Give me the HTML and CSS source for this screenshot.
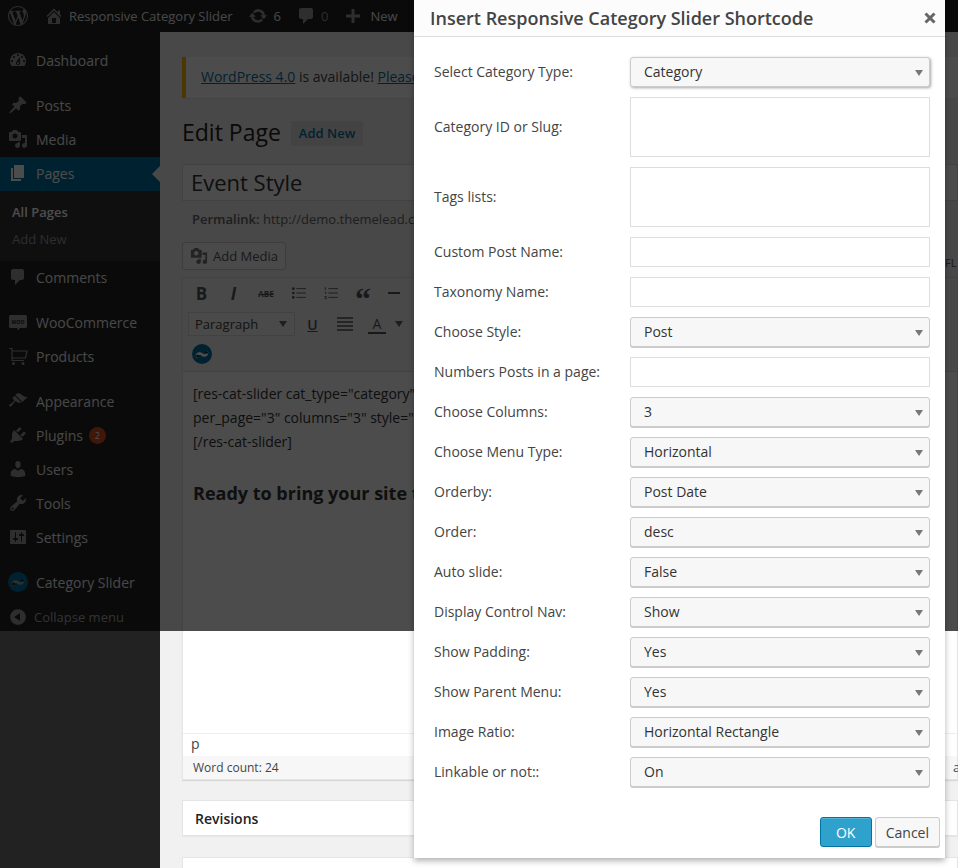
FILE: index.html
```html
<!DOCTYPE html>
<html>
<head>
  <title>Edit Page</title>
  <link rel="stylesheet" href="styles.css">
</head>
<body>
<div class="page">
  <div class="adminbar">
    <svg class="wplogo" viewBox="0 0 20 20"><path d="M20 10c0-5.51-4.49-10-10-10C4.48 0 0 4.49 0 10c0 5.52 4.48 10 10 10 5.51 0 10-4.48 10-10zM7.78 15.37L4.37 6.22c.55-.02 1.17-.08 1.17-.08.5-.06.44-1.13-.06-1.11 0 0-1.45.11-2.37.11-.18 0-.37 0-.58-.01C4.12 2.69 6.87 1.11 10 1.11c2.33 0 4.45.87 6.05 2.34-.68-.11-1.65.39-1.65 1.58 0 .74.45 1.36.9 2.1.35.61.55 1.36.55 2.46 0 1.49-1.4 5-1.4 5l-3.03-8.37c.54-.02.82-.17.82-.17.5-.05.44-1.25-.06-1.22 0 0-1.44.12-2.38.12-.87 0-2.33-.12-2.33-.12-.5-.03-.56 1.2-.06 1.22l.92.08 1.26 3.41zM17.41 10c.24-.64.74-1.87.43-4.25.7 1.29 1.05 2.71 1.05 4.25 0 3.29-1.73 6.24-4.4 7.78.97-2.59 1.94-5.2 2.92-7.78zM6.1 18.09C3.12 16.65 1.11 13.53 1.11 10c0-1.3.23-2.48.72-3.59C3.25 10.3 4.67 14.2 6.1 18.09zm4.03-6.63l2.58 6.98c-.86.29-1.76.45-2.71.45-.79 0-1.57-.11-2.29-.33.81-2.38 1.62-4.74 2.42-7.1z"/></svg>
    <div class="bar-item bar-site"><svg class="bar-icon" viewBox="0 0 20 20"><path d="M16 8.5l1.53 1.53-1.06 1.06L10 4.62l-6.47 6.47-1.06-1.06L10 2.5l4 4v-2h2v4zm-6-2.46l6 5.99V18H4v-5.97zM12 17v-5H8v5h4z"/></svg>Responsive Category Slider</div>
    <div class="bar-item bar-updates"><svg class="bar-icon" viewBox="0 0 20 20"><path d="M10.2 3.28c3.53 0 6.43 2.61 6.92 6h2.08l-3.5 4-3.5-4h2.32c-.45-1.97-2.21-3.45-4.32-3.45-1.45 0-2.73.71-3.54 1.78L4.95 5.66C6.23 4.2 8.11 3.28 10.2 3.28zm-.4 13.44c-3.52 0-6.43-2.61-6.92-6H.8l3.5-4c1.17 1.33 2.33 2.67 3.5 4H5.48c.45 1.97 2.21 3.45 4.32 3.45 1.45 0 2.73-.71 3.54-1.78l1.71 1.95c-1.28 1.46-3.15 2.38-5.25 2.38z"/></svg>6</div>
    <div class="bar-item bar-comments"><svg class="bar-icon" viewBox="0 0 20 20"><path d="M5 2h10c1.1 0 2 .9 2 2v7c0 1.1-.9 2-2 2h-3l-5 5v-5H5c-1.1 0-2-.9-2-2V4c0-1.1.9-2 2-2z"/></svg><span class="muted">0</span></div>
    <div class="bar-item bar-new"><svg class="bar-icon" viewBox="0 0 20 20"><path d="M17 8.500v3h-5.500V17h-3v-5.500H3v-3h5.500V3h3v5.500z"/></svg>New</div>
  </div>

  <div class="layout">
    <nav class="sidebar">
      <a class="menu-item"><svg class="menu-icon" viewBox="0 0 20 20"><path d="M3.76 16h12.48c1.1-1.37 1.76-3.11 1.76-5 0-4.42-3.58-8-8-8s-8 3.58-8 8c0 1.89.66 3.63 1.76 5zM10 4c.55 0 1 .45 1 1s-.45 1-1 1-1-.45-1-1 .45-1 1-1zM6 6c.55 0 1 .45 1 1s-.45 1-1 1-1-.45-1-1 .45-1 1-1zm8 0c.55 0 1 .45 1 1s-.45 1-1 1-1-.45-1-1 .45-1 1-1zm-5.37 5.55L12 7v6c0 1.1-.9 2-2 2s-2-.9-2-2c0-.57.24-1.08.63-1.45zM4 10c.55 0 1 .45 1 1s-.45 1-1 1-1-.45-1-1 .45-1 1-1zm12 0c.55 0 1 .45 1 1s-.45 1-1 1-1-.45-1-1 .45-1 1-1zm-5 3c0-.55-.45-1-1-1s-1 .45-1 1 .45 1 1 1 1-.45 1-1z"/></svg>Dashboard</a>
      <div class="menu-sep"></div>
      <a class="menu-item"><svg class="menu-icon" viewBox="0 0 20 20"><path d="M10.44 3.02l1.82-1.82 6.36 6.35-1.83 1.82c-1.05-.68-2.48-.57-3.41.36l-.75.75c-.92.93-1.04 2.35-.35 3.41l-1.83 1.82-2.41-2.41-2.8 2.79c-.42.42-3.38 2.71-3.8 2.29s1.86-3.39 2.28-3.81l2.79-2.79L4.1 9.36l1.83-1.82c1.05.69 2.48.57 3.4-.36l.75-.75c.93-.92 1.05-2.35.36-3.41z"/></svg>Posts</a>
      <a class="menu-item"><svg class="menu-icon" viewBox="0 0 20 20"><path d="M13 11V4c0-.55-.45-1-1-1h-1.67L9 1H5L3.67 3H2c-.55 0-1 .45-1 1v7c0 .55.45 1 1 1h10c.55 0 1-.45 1-1zM7 4.5c1.38 0 2.5 1.12 2.5 2.5S8.38 9.5 7 9.5 4.5 8.38 4.5 7 5.62 4.5 7 4.5zM14 6h5v10.5c0 1.38-1.12 2.5-2.5 2.5S14 17.88 14 16.5s1.12-2.5 2.5-2.5c.17 0 .34.02.5.05V9h-3V6zm-4 8.05V13h2v3.5c0 1.38-1.12 2.5-2.5 2.5S7 17.88 7 16.5 8.12 14 9.5 14c.17 0 .34.02.5.05z"/></svg>Media</a>
      <a class="menu-item current"><svg class="menu-icon" viewBox="0 0 20 20"><path d="M6 15V2h10v13H6zm-1 1h8v2H3V5h2v11z"/></svg>Pages</a>
      <div class="submenu">
        <a class="sub-item sub-current">All Pages</a>
        <a class="sub-item">Add New</a>
      </div>
      <a class="menu-item"><svg class="menu-icon" viewBox="0 0 20 20"><path d="M5 2h9c1.1 0 2 .9 2 2v7c0 1.1-.9 2-2 2h-2l-5 5v-5H5c-1.1 0-2-.9-2-2V4c0-1.1.9-2 2-2z"/></svg>Comments</a>
      <div class="menu-sep"></div>
      <a class="menu-item"><svg class="menu-icon" viewBox="0 0 20 20"><path d="M2.5 3h15c.8 0 1.5.7 1.5 1.5v10c0 .8-.7 1.5-1.5 1.5H12l-2 2.5L9 16H2.5C1.7 16 1 15.300 1 14.500v-10C1 3.700 1.700 3 2.500 3z"/><text class="woo-text" x="10" y="11.500" text-anchor="middle">WOO</text></svg>WooCommerce</a>
      <a class="menu-item"><svg class="menu-icon" viewBox="0 0 20 20"><path class="cart" d="M1 2.500h3v12h12M4 5h15l-1.500 7H4"/><circle cx="5.500" cy="17.500" r="1.500"/><circle cx="15" cy="17.500" r="1.500"/></svg>Products</a>
      <div class="menu-sep"></div>
      <a class="menu-item"><svg class="menu-icon" viewBox="0 0 20 20"><path d="M14.480 11.060L7.410 3.990l1.500-1.500c.5-.56 2.300-.47 3.510.32 1.210.8 1.430 1.280 2.910 2.100 1.180.64 2.450 1.260 4.450.85zm-.71.71L6.700 4.700 4.930 6.470c-.39.39-.39 1.020 0 1.410l1.060 1.060c.39.39.39 1.030 0 1.420-.6.6-1.430 1.110-2.210 1.690-.35.26-.7.530-1.010.84C1.430 13.230.4 14.060 1.400 15.060c1 1 1.830-.03 3.170-1.370.31-.31.58-.66.84-1.010.58-.78 1.090-1.610 1.690-2.210.39-.39 1.030-.39 1.420 0l1.060 1.060c.39.39 1.020.39 1.410 0z"/></svg>Appearance</a>
      <a class="menu-item"><svg class="menu-icon" viewBox="0 0 20 20"><path d="M13.110 4.360L9.870 7.600 8 5.730l3.240-3.240c.35-.34 1.050-.2 1.560.32.52.51.66 1.210.31 1.550zm-8 1.770l.91-1.120 9.010 9.010-1.190.84c-.71.71-2.630 1.160-3.820 1.160H6.140L4.900 17.260c-.59.59-1.540.59-2.120 0-.59-.58-.59-1.530 0-2.120l1.240-1.240v-3.880c0-1.130.4-3.190 1.090-3.890zm7.260 3.970l3.240-3.240c.34-.35 1.040-.21 1.550.31.52.51.66 1.210.31 1.550l-3.240 3.250z"/></svg>Plugins<span class="badge">2</span></a>
      <a class="menu-item"><svg class="menu-icon" viewBox="0 0 20 20"><path d="M10 9.250c-2.270 0-2.730-3.440-2.730-3.440C7 4.020 7.820 2 9.970 2c2.160 0 2.980 2.020 2.710 3.810 0 0-.41 3.440-2.680 3.440zm0 2.570L12.720 10c2.390 0 4.520 2.330 4.520 4.530v2.490s-3.650 1.130-7.240 1.130c-3.650 0-7.240-1.130-7.240-1.130v-2.490c0-2.250 1.940-4.480 4.470-4.480z"/></svg>Users</a>
      <a class="menu-item"><svg class="menu-icon" viewBox="0 0 20 20"><path d="M16.680 9.770c-1.340 1.340-3.300 1.670-4.950.99l-5.410 6.520c-.99.99-2.590.99-3.580 0s-.99-2.590 0-3.570l6.520-5.420c-.68-1.650-.35-3.610.99-4.950 1.280-1.280 3.120-1.620 4.720-1.060l-2.890 2.890 2.820 2.820 2.860-2.870c.53 1.580.18 3.390-1.080 4.650zM3.810 16.210c.4.39 1.040.39 1.430 0 .4-.4.4-1.040 0-1.430-.39-.4-1.030-.4-1.430 0-.39.39-.39 1.030 0 1.430z"/></svg>Tools</a>
      <a class="menu-item"><svg class="menu-icon" viewBox="0 0 20 20"><path d="M18 16V4c0-.55-.45-1-1-1H3c-.55 0-1 .45-1 1v12c0 .55.45 1 1 1h14c.55 0 1-.45 1-1zM8 11h1c.55 0 1 .45 1 1s-.45 1-1 1H8v1.500c0 .28-.22.5-.5.5s-.5-.22-.5-.5V13H6c-.55 0-1-.45-1-1s.45-1 1-1h1V5.500c0-.28.22-.5.5-.5s.5.22.5.5V11zm5-2h-1c-.55 0-1-.45-1-1s.45-1 1-1h1V5.500c0-.28.22-.5.5-.5s.5.22.5.5V7h1c.55 0 1 .45 1 1s-.45 1-1 1h-1v5.500c0 .28-.22.5-.5.5s-.5-.22-.5-.5V9z"/></svg>Settings</a>
      <div class="menu-sep"></div>
      <a class="menu-item"><svg class="slider-icon" viewBox="0 0 20 20"><circle cx="10" cy="10" r="10"/><path d="M5 12.500c0-3.500 3.500-3.500 5-2s5 1.500 5-2"/><circle class="slider-end" cx="5.500" cy="12" r="1.300"/><circle class="slider-end" cx="14.500" cy="8.500" r="1.300"/></svg>Category Slider</a>
      <a class="menu-item collapse"><svg class="menu-icon" viewBox="0 0 20 20"><path d="M10 2.160c4.330 0 7.840 3.510 7.840 7.840s-3.510 7.840-7.840 7.840S2.160 14.330 2.160 10 5.710 2.160 10 2.160zm2 11.720V6.120L6.180 9.970z"/></svg>Collapse menu</a>
    </nav>

    <main class="main">
      <div class="notice"><a>WordPress 4.0</a> is available! <a>Please</a></div>
      <div class="heading">
        <h1>Edit Page</h1>
        <a class="add-new">Add New</a>
      </div>
      <div class="title-field">Event Style</div>
      <div class="permalink"><b>Permalink:</b> http://demo.themelead.c</div>
      <div class="media-row">
        <a class="media-btn"><svg class="media-icon" viewBox="0 0 20 20"><path d="M13 11V4c0-.55-.45-1-1-1h-1.670L9 1H5L3.670 3H2c-.55 0-1 .45-1 1v7c0 .55.45 1 1 1h10c.55 0 1-.45 1-1zM7 4.500c1.380 0 2.500 1.120 2.500 2.500S8.380 9.500 7 9.500 4.500 8.380 4.500 7 5.620 4.500 7 4.500zM14 6h5v10.500c0 1.380-1.120 2.500-2.500 2.500S14 17.880 14 16.500s1.120-2.500 2.500-2.500c.17 0 .34.02.5.05V9h-3V6zm-4 8.050V13h2v3.500c0 1.380-1.120 2.500-2.500 2.500S7 17.880 7 16.500 8.120 14 9.500 14c.17 0 .34.02.5.05z"/></svg>Add Media</a>
        <span class="tabs">FL</span>
      </div>
      <div class="editor">
        <div class="toolbar">
          <div class="tool-row">
            <span class="tool tool-b">B</span>
            <span class="tool tool-i">I</span>
            <span class="tool tool-abe">ABE</span>
            <svg class="tool-svg" viewBox="0 0 16 14"><path d="M5 2h11M5 7h11M5 12h11"/><circle class="dot" cx="1.500" cy="2" r="1.500"/><circle class="dot" cx="1.500" cy="7" r="1.500"/><circle class="dot" cx="1.500" cy="12" r="1.500"/></svg>
            <svg class="tool-svg" viewBox="0 0 16 14"><path d="M5 2h11M5 7h11M5 12h11M1.500 .5v3M1 6h1v2M.5 11h2v2.500h-2"/></svg>
            <span class="tool tool-quote">“</span>
            <span class="tool-dash"></span>
          </div>
          <div class="tool-row tool-row2">
            <div class="format">Paragraph<span class="caret"></span></div>
            <span class="tool tool-u">U</span>
            <svg class="tool-svg tool-lines" viewBox="0 0 16 14"><path d="M0 1h16M0 5h16M0 9h16M0 13h16"/></svg>
            <span class="tool tool-a">A</span>
            <span class="caret"></span>
          </div>
          <div class="tool-row tool-row3">
            <svg class="slider-icon bright" viewBox="0 0 20 20"><circle cx="10" cy="10" r="10"/><path d="M5 12.500c0-3.500 3.500-3.500 5-2s5 1.500 5-2"/><circle class="slider-end" cx="5.500" cy="12" r="1.300"/><circle class="slider-end" cx="14.500" cy="8.500" r="1.300"/></svg>
          </div>
        </div>
        <div class="editor-body">
          <p>[res-cat-slider cat_type="category"<br>per_page="3" columns="3" style="<br>[/res-cat-slider]</p>
          <h2>Ready to bring your site t</h2>
        </div>
        <div class="path">p</div>
        <div class="word-count"><span class="count-text">Word count: 24</span><span>a</span></div>
      </div>
      <div class="box">Revisions</div>
      <div class="box box-next"></div>
    </main>
  </div>

  <div class="backdrop"></div>

  <div class="modal">
    <div class="modal-head">
      <h2>Insert Responsive Category Slider Shortcode</h2>
      <svg class="modal-close" viewBox="0 0 12 12"><path d="M1.500 1.500l9 9M10.500 1.500l-9 9"/></svg>
    </div>
    <form class="modal-form">
      <label>Select Category Type:</label>
      <div class="select-wrap"><select class="focused"><option>Category</option></select></div>
      <label>Category ID or Slug:</label>
      <textarea></textarea>
      <label>Tags lists:</label>
      <textarea></textarea>
      <label>Custom Post Name:</label>
      <input type="text">
      <label>Taxonomy Name:</label>
      <input type="text">
      <label>Choose Style:</label>
      <div class="select-wrap"><select><option>Post</option></select></div>
      <label>Numbers Posts in a page:</label>
      <input type="text">
      <label>Choose Columns:</label>
      <div class="select-wrap"><select><option>3</option></select></div>
      <label>Choose Menu Type:</label>
      <div class="select-wrap"><select><option>Horizontal</option></select></div>
      <label>Orderby:</label>
      <div class="select-wrap"><select><option>Post Date</option></select></div>
      <label>Order:</label>
      <div class="select-wrap"><select><option>desc</option></select></div>
      <label>Auto slide:</label>
      <div class="select-wrap"><select><option>False</option></select></div>
      <label>Display Control Nav:</label>
      <div class="select-wrap"><select><option>Show</option></select></div>
      <label>Show Padding:</label>
      <div class="select-wrap"><select><option>Yes</option></select></div>
      <label>Show Parent Menu:</label>
      <div class="select-wrap"><select><option>Yes</option></select></div>
      <label>Image Ratio:</label>
      <div class="select-wrap"><select><option>Horizontal Rectangle</option></select></div>
      <label>Linkable or not::</label>
      <div class="select-wrap"><select><option>On</option></select></div>
    </form>
    <div class="modal-foot">
      <button class="btn btn-ok">OK</button>
      <button class="btn">Cancel</button>
    </div>
  </div>
</div>
</body>
</html>
```

FILE: styles.css
```css
html, body {
  margin: 0;
  padding: 0;
}
body {
  font-family: "Open Sans", sans-serif;
  font-size: 13px;
  color: #444;
  background: #f1f1f1;
}
.page {
  position: relative;
  width: 958px;
  height: 868px;
  overflow: hidden;
}

/* top bar */
.adminbar {
  display: flex;
  align-items: center;
  height: 32px;
  background: #222;
  color: #eee;
  white-space: nowrap;
}
.wplogo {
  width: 20px;
  height: 20px;
  margin-left: 8px;
  fill: #999;
}
.bar-item {
  display: flex;
  align-items: center;
}
.bar-icon {
  width: 20px;
  height: 20px;
  fill: #999;
}
.bar-site {
  margin-left: 16px;
  gap: 5px;
}
.bar-updates {
  margin-left: 15px;
  gap: 6px;
}
.bar-comments {
  margin-left: 15px;
  gap: 5px;
}
.bar-new {
  margin-left: 15px;
  gap: 7px;
}
.muted {
  color: #999;
}

/* sidebar */
.layout {
  display: grid;
  grid-template-columns: 160px 798px;
  height: 836px;
}
.sidebar {
  background: #222;
  padding-top: 12px;
  color: #eee;
  font-size: 14px;
}
.menu-item {
  position: relative;
  display: flex;
  align-items: center;
  height: 34px;
  padding: 0 0 2px 8px;
  box-sizing: border-box;
}
.menu-icon {
  width: 20px;
  height: 20px;
  margin-right: 8px;
  fill: #999;
}
.menu-sep {
  height: 11px;
}
.current {
  background: #0074a2;
  color: #fff;
}
.current .menu-icon {
  fill: #fff;
}
.current::after {
  content: "";
  position: absolute;
  right: 0;
  top: 9px;
  border: 8px solid transparent;
  border-right-color: #f1f1f1;
  border-left-width: 0;
}
.submenu {
  background: #333;
  height: 70px;
  padding-top: 8px;
  box-sizing: border-box;
  font-size: 13px;
}
.sub-item {
  display: block;
  height: 27px;
  line-height: 27px;
  padding-left: 12px;
  color: #999;
}
.sub-current {
  color: #fff;
  font-weight: 600;
}
.woo-text {
  font-family: "Open Sans", sans-serif;
  font-size: 5px;
  font-weight: 700;
  fill: #222;
}
.cart {
  fill: none;
  stroke: #999;
  stroke-width: 1.200;
}
.badge {
  width: 17px;
  height: 17px;
  margin-left: 6px;
  border-radius: 50%;
  background: #d54e21;
  color: #fff;
  font-size: 9px;
  line-height: 17px;
  text-align: center;
}
.slider-icon {
  width: 20px;
  height: 20px;
  margin-right: 8px;
}
.slider-icon circle {
  fill: #0074a2;
}
.slider-icon path {
  fill: none;
  stroke: #999;
  stroke-width: 2.600;
  stroke-linecap: round;
}
.slider-icon .slider-end {
  fill: #111;
}
.slider-icon.bright path {
  stroke: #fff;
}
.collapse {
  padding-bottom: 0;
  color: #aaa;
  font-size: 13px;
}
.collapse .menu-icon {
  margin-right: 6px;
}

/* main column */
.main {
  padding: 25px 0 0 22px;
  min-width: 0;
}
.main a {
  text-decoration: none;
}
.notice {
  height: 41px;
  line-height: 39px;
  padding-left: 15px;
  box-sizing: border-box;
  background: #fff;
  border-left: 4px solid #ffba00;
  box-shadow: 0 1px 1px rgba(0, 0, 0, .04);
  font-size: 14px;
  white-space: nowrap;
}
.notice a {
  color: #0074a2;
  text-decoration: underline;
}
.heading {
  display: flex;
  align-items: center;
  margin-top: 20px;
  height: 27px;
}
.heading h1 {
  margin: 0;
  font-size: 23px;
  font-weight: 400;
  color: #222;
}
.add-new {
  margin: 4px 0 0 10px;
  padding: 0 8px;
  height: 25px;
  line-height: 25px;
  background: #e0e0e0;
  color: #0074a2;
  font-weight: 600;
}
.title-field {
  margin-top: 19px;
  height: 37px;
  line-height: 34px;
  padding-left: 8px;
  box-sizing: border-box;
  background: #fff;
  border: 1px solid #ddd;
  font-size: 22px;
  color: #333;
}
.permalink {
  margin-top: 8px;
  height: 20px;
  line-height: 20px;
  padding-left: 10px;
  color: #666;
  white-space: nowrap;
}
.permalink b {
  font-weight: 600;
}
.media-row {
  display: flex;
  margin-top: 13px;
}
.media-btn {
  display: flex;
  align-items: center;
  gap: 5px;
  width: 104px;
  height: 28px;
  padding-left: 7px;
  box-sizing: border-box;
  background: #f7f7f7;
  border: 1px solid #ccc;
  border-radius: 3px;
  color: #555;
}
.media-icon {
  width: 18px;
  height: 18px;
  fill: #777;
}
.tabs {
  margin-left: 659px;
  height: 28px;
  line-height: 42px;
  font-size: 11px;
  color: #555;
}
.editor {
  margin-top: 7px;
  border: 1px solid #e5e5e5;
  border-top-color: #ddd;
  background: #fff;
  box-shadow: 0 1px 1px rgba(0, 0, 0, .1);
}
.toolbar {
  height: 94px;
  padding: 4px 0 0 5px;
  box-sizing: border-box;
  background: #f5f5f5;
  border-bottom: 1px solid #ddd;
}
.tool-row {
  display: flex;
  align-items: center;
  height: 22px;
  color: #555;
}
.tool {
  display: block;
  text-align: center;
}
.tool-b {
  width: 15px;
  margin-left: 6px;
  font-size: 17px;
  font-weight: 700;
}
.tool-i {
  width: 15px;
  margin-left: 17px;
  font-size: 17px;
  font-weight: 700;
  font-style: italic;
}
.tool-abe {
  width: 16px;
  margin-left: 17px;
  font-size: 8px;
  font-weight: 700;
  text-decoration: line-through;
}
.tool-svg {
  width: 14px;
  height: 14px;
  margin-left: 18px;
  fill: none;
  stroke: #555;
  stroke-width: 1;
}
.tool-svg .dot {
  fill: #555;
  stroke: none;
}
.tool-quote {
  width: 15px;
  margin-left: 17px;
  height: 22px;
  font-family: "Liberation Serif", serif;
  font-size: 32px;
  font-weight: 700;
  line-height: 34px;
}
.tool-dash {
  width: 12px;
  height: 2px;
  margin-left: 18px;
  background: #555;
}
.tool-row2 {
  margin-top: 8px;
  height: 24px;
}
.format {
  display: flex;
  align-items: center;
  justify-content: space-between;
  width: 107px;
  height: 24px;
  padding: 0 7px 0 6px;
  box-sizing: border-box;
  border: 1px solid #ddd;
  background: #f7f7f7;
  color: #444;
}
.caret {
  border: 4px solid transparent;
  border-top: 6px solid #666;
  border-bottom-width: 0;
}
.tool-u {
  width: 11px;
  margin-left: 12px;
  font-size: 14px;
  font-weight: 600;
  text-decoration: underline;
}
.tool-lines {
  margin-left: 19px;
  width: 16px;
  stroke-width: 1.600;
}
.tool-a {
  margin-left: 15px;
  width: 18px;
  border-bottom: 2px solid #555;
  font-size: 14px;
  line-height: 17px;
}
.tool-row2 > .caret {
  margin-left: 9px;
}
.tool-row3 {
  margin-top: 8px;
  height: 20px;
}
.tool-row3 .slider-icon {
  margin: 0 0 0 4px;
}
.editor-body {
  height: 361px;
  padding: 10px 0 0 10px;
  box-sizing: border-box;
  color: #333;
  font-size: 14px;
  line-height: 24px;
  white-space: nowrap;
}
.editor-body p {
  margin: 0;
}
.editor-body h2 {
  margin: 26px 0 0;
  font-size: 18px;
  line-height: 26px;
  font-weight: 700;
}
.path {
  height: 23px;
  line-height: 19px;
  padding-left: 8px;
  border-top: 1px solid #eee;
  box-sizing: border-box;
  font-size: 14px;
  color: #444;
}
.word-count {
  display: grid;
  grid-template-columns: 760px 1fr;
  height: 23px;
  line-height: 23px;
  padding-left: 10px;
  background: #f7f7f7;
  font-size: 12px;
  color: #444;
}
.word-count span:last-child {
  font-size: 13px;
}
.box {
  margin-top: 20px;
  height: 36px;
  line-height: 36px;
  padding-left: 12px;
  background: #fff;
  border: 1px solid #e5e5e5;
  box-sizing: border-box;
  box-shadow: 0 1px 1px rgba(0, 0, 0, .04);
  color: #222;
  font-size: 14px;
  font-weight: 600;
}
.box-next {
  margin-top: 21px;
  height: 40px;
}

/* dark layer that stops short of the page bottom */
.backdrop {
  position: absolute;
  left: 0;
  top: 0;
  width: 100%;
  height: 631px;
  background: rgba(0, 0, 0, .7);
}

/* dialog */
.modal {
  position: absolute;
  left: 414px;
  top: 0;
  width: 531px;
  height: 858px;
  background: #fff;
  box-shadow: 0 3px 6px rgba(0, 0, 0, .3);
}
.modal-head {
  display: flex;
  align-items: center;
  justify-content: space-between;
  height: 37px;
  padding: 0 9px 0 16px;
  box-sizing: border-box;
  background: #fcfcfc;
  border-bottom: 1px solid #ddd;
}
.modal-head h2 {
  margin: 0;
  font-size: 18px;
  font-weight: 600;
  color: #444;
}
.modal-close {
  width: 12px;
  height: 12px;
  fill: none;
  stroke: #666;
  stroke-width: 3;
}
.modal-form {
  display: grid;
  grid-template-columns: 196px 300px;
  align-items: center;
  row-gap: 10px;
  padding: 20px 0 0 20px;
  font-size: 14px;
}
.modal-form label {
  padding-bottom: 2px;
  color: #444;
}
.modal-form input,
.modal-form textarea {
  display: block;
  width: 300px;
  height: 30px;
  padding: 0;
  box-sizing: border-box;
  background: #fff;
  border: 1px solid #ddd;
  resize: none;
}
.modal-form textarea {
  height: 60px;
}
.select-wrap {
  position: relative;
}
.select-wrap::after {
  content: "";
  position: absolute;
  right: 7px;
  top: 13px;
  border: 4px solid transparent;
  border-top: 6px solid #777;
  border-bottom-width: 0;
}
.select-wrap select {
  display: block;
  width: 300px;
  height: 30px;
  padding: 0 0 2px 13px;
  box-sizing: border-box;
  appearance: none;
  background: #f7f7f7;
  border: 1px solid #ccc;
  border-radius: 3px;
  box-shadow: 0 1px 0 #ccc;
  font-family: "Open Sans", sans-serif;
  font-size: 14px;
  color: #333;
}
.select-wrap select.focused {
  box-shadow: 1px 1px 3px rgba(0, 0, 0, .35);
}
.modal-foot {
  display: flex;
  justify-content: flex-end;
  gap: 3px;
  margin-top: 30px;
  padding-right: 5px;
}
.btn {
  height: 30px;
  padding: 0 10px;
  background: #f7f7f7;
  border: 1px solid #ccc;
  border-radius: 3px;
  box-shadow: 0 1px 0 #ccc;
  font-family: "Open Sans", sans-serif;
  font-size: 14px;
  color: #444;
}
.btn-ok {
  width: 52px;
  background: #2ea2cc;
  border-color: #0074a2;
  box-shadow: inset 0 1px 0 rgba(120, 200, 230, .5);
  color: #fff;
}
```
